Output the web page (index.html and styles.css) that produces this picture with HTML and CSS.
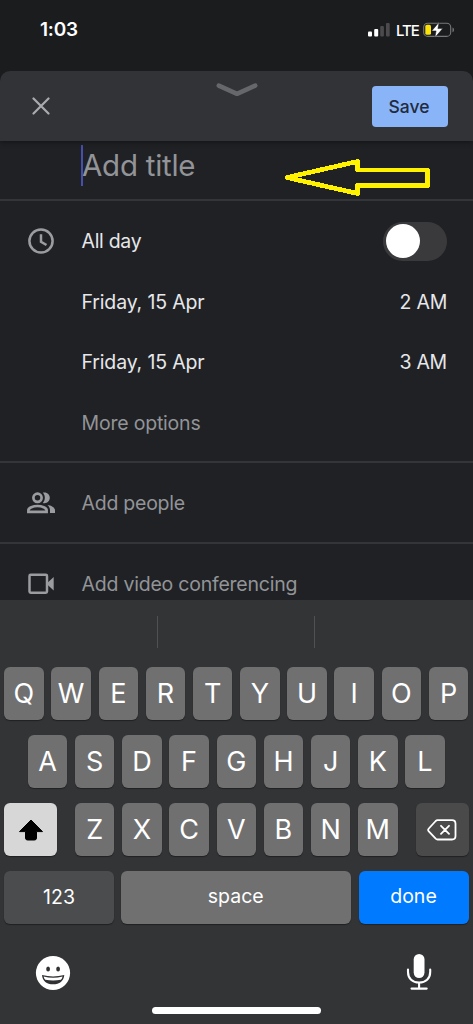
FILE: index.html
```html
<!DOCTYPE html>
<html lang="en">
<head>
<meta charset="utf-8">
<title>New event</title>
<link rel="stylesheet" href="styles.css">
</head>
<body>
<div class="phone">
  <div class="status">
    <span class="time">1:03</span>
    <div class="indicators">
      <svg class="signal" width="22" height="14" viewBox="0 0 22 14"><rect x="0" y="8.5" width="4" height="5" rx="1" fill="#fff"/><rect x="6.2" y="6" width="4" height="7.5" rx="1" fill="#fff"/><rect x="12.2" y="3" width="3.7" height="10.5" rx="1" fill="#4b4b4d"/><rect x="18" y="0" width="3.7" height="13.5" rx="1" fill="#4b4b4d"/></svg>
      <span class="lte">LTE</span>
      <svg class="battery" width="32" height="16" viewBox="0 0 32 16"><rect x=".7" y="1.2" width="27" height="13.2" rx="4" fill="none" stroke="#77777a" stroke-width="1.1"/><path d="M29.5 5.6q1.5.5 1.5 2.3t-1.500 2.300z" fill="#77777a"/><rect x="2.3" y="2.8" width="5.7" height="10" rx="1.6" fill="#fbe20a"/><path d="M16.100.3 8.700 8.900h4.400L11.900 15.500l7.800-8.900h-4.800z" fill="#fff" stroke="#1b1c1e" stroke-width=".5"/></svg>
    </div>
  </div>
  <main class="sheet">
    <header class="header">
      <svg class="close" width="18" height="18" viewBox="0 0 18 18"><path d="M1.500 1.500l15 15M16.500 1.500l-15 15" stroke="#aaabaf" stroke-width="2.200" stroke-linecap="round"/></svg>
      <svg class="grabber" width="42" height="16" viewBox="0 0 42 16"><path d="M2.800 3.600 21 11.800 39.200 3.600" fill="none" stroke="#66676b" stroke-width="4.600" stroke-linecap="round" stroke-linejoin="round"/></svg>
      <button class="save">Save</button>
    </header>
    <section class="title">
      <span class="caret"></span><span class="placeholder">Add title</span>
      <svg class="arrow" width="148" height="40" viewBox="0 0 148 40"><path d="M4 20.500 74.500 4.500V13H144.500V28.500H74.500V36.500Z" fill="none" stroke="#fff200" stroke-width="4.700" stroke-linejoin="round" shape-rendering="crispEdges"/></svg>
    </section>
    <section class="when">
      <div class="row">
        <svg class="icon" width="28" height="28" viewBox="0 0 28 28" fill="none" stroke="#9b9ca0" stroke-width="2.500"><circle cx="14" cy="14" r="11.600"/><path d="M14 7.300V14.700L19.500 18"/></svg>
        <span class="allday">All day</span><span class="toggle"><i class="knob"></i></span>
      </div>
      <div class="row"><span class="date">Friday, 15 Apr</span><span class="hour">2 AM</span></div>
      <div class="row"><span class="date">Friday, 15 Apr</span><span class="hour">3 AM</span></div>
      <div class="row"><span class="more muted">More options</span></div>
    </section>
    <section class="row single">
      <svg class="icon" width="28" height="28" viewBox="0 0 28 28"><g fill="none" stroke="#9b9ca0" stroke-width="2.700"><circle cx="10.500" cy="8.800" r="4.100"/><path d="M1.400 22.800v-1.600c0-2.500 4.800-4.200 9.100-4.200s9.100 1.700 9.100 4.200v1.600z"/></g><path d="M15.800 3.600c4-1 7 1.700 7 5.200s-3 6.200-7 5.200c2.700-3 2.700-7.400 0-10.400zM20.500 15.900c3.700.5 7.500 2.400 7.500 5.400v2.800h-5v-2.800c0-2.400-1-4.200-2.500-5.400z" fill="#9b9ca0"/></svg>
      <span class="people muted">Add people</span>
    </section>
    <section class="row single">
      <svg class="icon" width="28" height="28" viewBox="0 0 28 28"><rect x="2.500" y="4.800" width="17.500" height="18" rx="1.200" fill="none" stroke="#9b9ca0" stroke-width="2.500"/><path d="M20.500 12.800 26.700 7v13.600l-6.200-5.800z" fill="#9b9ca0"/></svg>
      <span class="video muted">Add video conferencing</span>
    </section>
  </main>
  <div class="keyboard">
    <div class="suggestions"><span></span><span></span><span></span></div>
    <div class="keys"><b>Q</b><b>W</b><b>E</b><b>R</b><b>T</b><b>Y</b><b>U</b><b>I</b><b>O</b><b>P</b></div>
    <div class="keys"><b>A</b><b>S</b><b>D</b><b>F</b><b>G</b><b>H</b><b>J</b><b>K</b><b>L</b></div>
    <div class="keys spread">
      <div class="shift"><svg width="26" height="22" viewBox="0 0 26 22"><path d="M13 1 24.500 12.600H18.500V19q0 2-2 2H9.500q-2 0-2-2V12.600H1.500z" fill="#000" stroke="#000" stroke-linejoin="round"/></svg></div>
      <div class="letters"><b>Z</b><b>X</b><b>C</b><b>V</b><b>B</b><b>N</b><b>M</b></div>
      <div class="delete"><svg width="30" height="22" viewBox="0 0 30 22" fill="none" stroke="#fff" stroke-width="1.800" stroke-linejoin="round" stroke-linecap="round"><path d="M10.500 1.200H25q3.500 0 3.500 3.500V17q0 3.500-3.500 3.500H10.500q-1 0-1.800-.8L1.800 12.300q-1.300-1.400 0-2.800L8.700 2q.8-.8 1.800-.8zM14 6.800l8 8M22 6.800l-8 8"/></svg></div>
    </div>
    <div class="keys spread words">
      <div class="num">123</div><div class="space">space</div><div class="done">done</div>
    </div>
    <div class="tools">
      <svg width="36" height="36" viewBox="0 0 36 36"><circle cx="18" cy="18" r="17.100" fill="#fff"/><ellipse cx="13.100" cy="14" rx="1.900" ry="2.500" fill="#303133"/><ellipse cx="23.100" cy="14" rx="1.900" ry="2.500" fill="#303133"/><path d="M7 20q11 2.800 22.300 0C28.800 26 24.500 29.300 18.100 29.300S7.400 26 7 20z" fill="#303133"/><path d="M8.600 21.600q9.500 2.400 19 0-.5 2.300-1.700 3.200-7.800 1.600-15.600 0-1.200-.9-1.700-3.200z" fill="#fff"/></svg>
      <svg width="26" height="38" viewBox="0 0 26 38"><rect x="7.700" y="1" width="10.800" height="24" rx="5.400" fill="#fff"/><path d="M2 16.500V19C2 25.500 6.500 29.500 13.100 29.500S24.200 25.500 24.200 19V16.500M13.100 29.500V35M5.500 35.600H20.700" fill="none" stroke="#fff" stroke-width="2.100" stroke-linecap="round"/></svg>
    </div>
    <div class="home"></div>
  </div>
</div>
</body>
</html>
```
FILE: styles.css
```css
* { box-sizing: border-box; }
body { margin: 0; background: #1b1c1e; font-family: Inter, "Liberation Sans", sans-serif; }
.phone { width: 473px; height: 1024px; overflow: hidden; display: flex; flex-direction: column; color: #e6e7ea; }
.status { height: 71px; flex: none; padding: 18px 18px 0 40px; display: flex; justify-content: space-between; }
.time { font-size: 19px; line-height: 23px; font-weight: 600; color: #fff; letter-spacing: -.2px; }
.indicators { display: flex; height: 23px; align-items: center; }
.lte { width: 27px; margin: 1px 0 0 6px; font-size: 15px; font-weight: 500; line-height: 23px; letter-spacing: -1px; color: #fff; }
.signal { margin-left: 1px; }
.sheet { height: 529px; flex: none; overflow: hidden; background: #202124; border-radius: 10px 10px 0 0; }
.header { height: 70px; background: #323336; display: flex; align-items: center; justify-content: space-between; padding: 0 25px 0 32px; box-shadow: 0 1px 5px #121315; position: relative; }
.close { width: 18px; }
.grabber { align-self: flex-start; margin: 11px 0 0 51px; }
.save { width: 76px; height: 41px; border: 0; padding: 0 2px 0 0; border-radius: 4px; background: #8ab4f8; color: #202b3f; font: 500 17.500px/41px Inter, sans-serif; }
.title { height: 60px; border-bottom: 2px solid #343538; display: flex; align-items: flex-start; padding: 4px 0 0 81px; }
.caret { width: 2px; height: 41px; background: #454fae; }
.placeholder { width: 200px; height: 41px; margin-left: -1px; font-size: 29.500px; line-height: 41px; letter-spacing: -.25px; color: #929498; }
.arrow { margin: 12px 0 0 1px; }
.when { height: 262px; padding-top: 10px; border-bottom: 2px solid #343538; }
.row { height: 60.500px; display: grid; grid-template-columns: 54.500px 1fr auto; align-items: center; padding: 0 26px 0 27px; font-size: 19.500px; line-height: 26px; }
.row > span:first-child { grid-column: 2; }
.single { height: 81px; border-bottom: 2px solid #343538; }
.allday { letter-spacing: -.3px; }
.date { letter-spacing: -.15px; }
.hour { letter-spacing: -.25px; }
.more { letter-spacing: -.2px; }
.people { letter-spacing: -.25px; }
.video { letter-spacing: -.22px; }
.muted { color: #929498; }
.toggle { width: 64px; height: 39px; padding: 2.500px; border-radius: 20px; background: #3a3a3d; }
.knob { display: block; width: 34px; height: 34px; border-radius: 50%; background: #fff; }
.keyboard { flex: 1; background: #333436; color: #fff; }
.suggestions { height: 67px; display: grid; grid-template-columns: 156.500px 157.500px 1fr; padding: 16px 0 19px; }
.suggestions span + span { border-left: 1px solid #505153; }
.keys { height: 53px; margin-bottom: 15px; padding: 0 4.500px 0 4px; display: flex; gap: 7.700px; justify-content: center; }
.keys b { width: 39.500px; height: 53px; border-radius: 6px; background: #707071; box-shadow: 0 1px 1px #202123; text-align: center; font-size: 27px; line-height: 54px; font-weight: 400; }
.spread { justify-content: space-between; }
.letters { display: flex; gap: 7.700px; }
.shift, .delete { width: 53px; border-radius: 6px; display: flex; align-items: center; justify-content: center; box-shadow: 0 1px 1px #202123; }
.shift { background: #d7d7d8; }
.delete { background: #4a4a4b; }
.words { font-size: 19.500px; line-height: 51px; text-align: center; gap: 7px; }
.words div { border-radius: 6px; box-shadow: 0 1px 1px #202123; }
.num { width: 110px; background: #4a4c4e; line-height: 53px; }
.space { flex: 1; margin-right: 1px; background: #707071; }
.done { width: 110px; background: #007aff; }
.tools { display: flex; justify-content: space-between; padding: 14px 41px 0 35px; height: 68px; align-items: flex-start; }
.tools svg:first-child { margin-top: 2px; }
.home { width: 169px; height: 7px; margin: 0 auto; border-radius: 4px; background: #fff; }
```
